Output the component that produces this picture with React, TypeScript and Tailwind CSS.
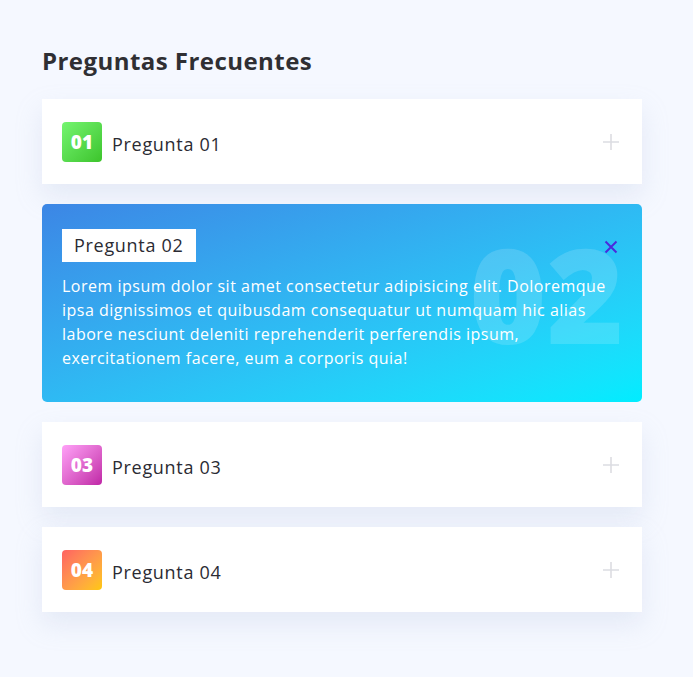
const faqs = [
  { n: "01", q: "Pregunta 01", badge: "bg-gradient-to-br from-[#74f56f] to-[#3cc42a]" },
  { n: "02", q: "Pregunta 02", badge: "" },
  { n: "03", q: "Pregunta 03", badge: "bg-gradient-to-br from-[#ffa1f8] to-[#bf23a6]" },
  { n: "04", q: "Pregunta 04", badge: "bg-gradient-to-br from-[#ff6161] to-[#ffc800]" },
];

function Plus() {
  return (
    <svg width="18" height="18" viewBox="0 0 18 18" className="shrink-0">
      <path d="M9 1v16M1 9h16" stroke="#dcdde2" strokeWidth="1.6" />
    </svg>
  );
}

function Close() {
  return (
    <svg width="14" height="14" viewBox="0 0 14 14" className="shrink-0">
      <path d="M1.5 1.5l11 11M12.5 1.5l-11 11" stroke="#4b2bdc" strokeWidth="2" />
    </svg>
  );
}

export default function App() {
  return (
    <div
      className="min-h-[677px] bg-[#f5f8ff] px-[42px] pt-[45px] pb-[60px] text-[#2b2b33]"
      style={{ fontFamily: "'Open Sans', 'Noto Sans', sans-serif" }}
    >
      <h2 className="text-[24px] font-bold leading-[32px] tracking-[0.45px] text-[#2f2f33]">
        Preguntas Frecuentes
      </h2>
      <div className="mt-[22px] flex w-[600px] flex-col gap-5">
        {faqs.map((f) =>
          f.n === "02" ? (
            <div
              key={f.n}
              className="relative h-[198px] overflow-hidden rounded-[5px] bg-gradient-to-br from-[#3c86e5] to-[#00edff] px-5 pt-[25px]"
            >
              <div
                aria-hidden="true"
                className="pointer-events-none absolute right-[18px] top-[23px] select-none text-[132px] font-extrabold leading-none text-white/15"
              >
                02
              </div>
              <div className="relative flex items-start justify-between">
                <span className="bg-white px-[12px] py-[3px] text-[18px] leading-[27px] tracking-[0.7px] text-[#2b2b33]">
                  {f.q}
                </span>
                <div className="mr-[4px] mt-[11px]">
                  <Close />
                </div>
              </div>
              <p className="relative mt-[12px] whitespace-nowrap text-[16px] leading-[24px] tracking-[0.5px] text-white">
                Lorem ipsum dolor sit amet consectetur adipisicing elit. Doloremque
                <br />
                ipsa dignissimos et quibusdam consequatur ut numquam hic alias
                <br />
                labore nesciunt deleniti reprehenderit perferendis ipsum,
                <br />
                exercitationem facere, eum a corporis quia!
              </p>
            </div>
          ) : (
            <div
              key={f.n}
              className="flex h-[85px] items-center gap-[10px] bg-white px-5 shadow-[0_12px_24px_rgba(180,190,220,0.25)]"
            >
              <span
                className={`flex h-10 w-10 items-center justify-center rounded-[4px] pt-[2px] text-[19px] font-extrabold text-white ${f.badge}`}
              >
                {f.n}
              </span>
              <span className="flex-1 pt-[5px] text-[18px] tracking-[0.7px] text-[#2b2b33]">{f.q}</span>
              <div className="mr-[2px] pt-[1px]">
                <Plus />
              </div>
            </div>
          )
        )}
      </div>
    </div>
  );
}
